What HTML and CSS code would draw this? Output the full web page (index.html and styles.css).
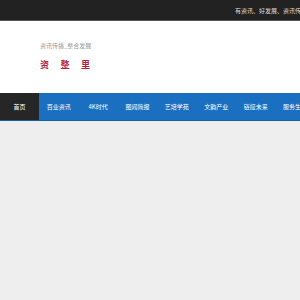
FILE: index.html
```html
<!DOCTYPE html>
<html lang="zh-CN">
  <head>
    <meta charset="UTF-8" />
    <meta name="viewport" content="width=device-width, initial-scale=1.0" />
    <title>资整里</title>
    <link rel="stylesheet" href="styles.css">
  </head>
  <body>
    <div class="topbar">
      <span class="slogan">有资讯、好发展、资讯传播，整合发展</span>
    </div>
    <div class="header">
      <div class="logo">
        <p class="logo-sub">资讯传播_整合发展</p>
        <p class="logo-name">资整里</p>
      </div>
    </div>
    <div class="nav">
      <a class="nav-item home" href="#">首页</a>
      <a class="nav-item" href="#">百业资讯</a>
      <a class="nav-item" href="#">4K时代</a>
      <a class="nav-item" href="#">图闻简报</a>
      <a class="nav-item" href="#">艺培学苑</a>
      <a class="nav-item" href="#">文韵产业</a>
      <a class="nav-item" href="#">链接未来</a>
      <a class="nav-item" href="#">服务生活</a>
    </div>
    <div class="main"></div>
  </body>
</html>
```

FILE: styles.css
```css
html,
body {
  margin: 0;
  height: 100%;
  overflow: hidden;
}
body {
  font-family: "Noto Sans CJK SC", "Noto Sans", sans-serif;
  background: #eeeeee;
  display: flex;
  flex-direction: column;
}
.topbar {
  height: 20px;
  background: #222222;
  border-bottom: 1px solid #555555;
  display: flex;
  align-items: center;
  padding-left: 235px;
  white-space: nowrap;
  overflow: hidden;
}
.slogan {
  font-size: 6px;
  color: #dddddd;
}
.header {
  height: 72px;
  background: #ffffff;
}
.logo {
  padding: 21px 0 0 40px;
}
.logo p {
  margin: 0;
}
.logo-sub {
  font-size: 6px;
  line-height: 8px;
  color: #999999;
}
.logo-name {
  margin-top: 9px !important;
  font-size: 9px;
  line-height: 12px;
  font-weight: bold;
  letter-spacing: 11.5px;
  color: #b71f40;
}
.nav {
  display: flex;
  height: 27px;
  background: #1b6fc0;
  border-bottom: 1px solid #155da5;
  white-space: nowrap;
  overflow: hidden;
}
.nav-item {
  flex: 0 0 39.4px;
  display: flex;
  align-items: center;
  justify-content: center;
  font-size: 6px;
  color: #ffffff;
  text-decoration: none;
}
.nav-item.home {
  flex-basis: 39px;
  background: #262626;
}
.main {
  flex: 1;
  background: #eeeeee;
}
```
